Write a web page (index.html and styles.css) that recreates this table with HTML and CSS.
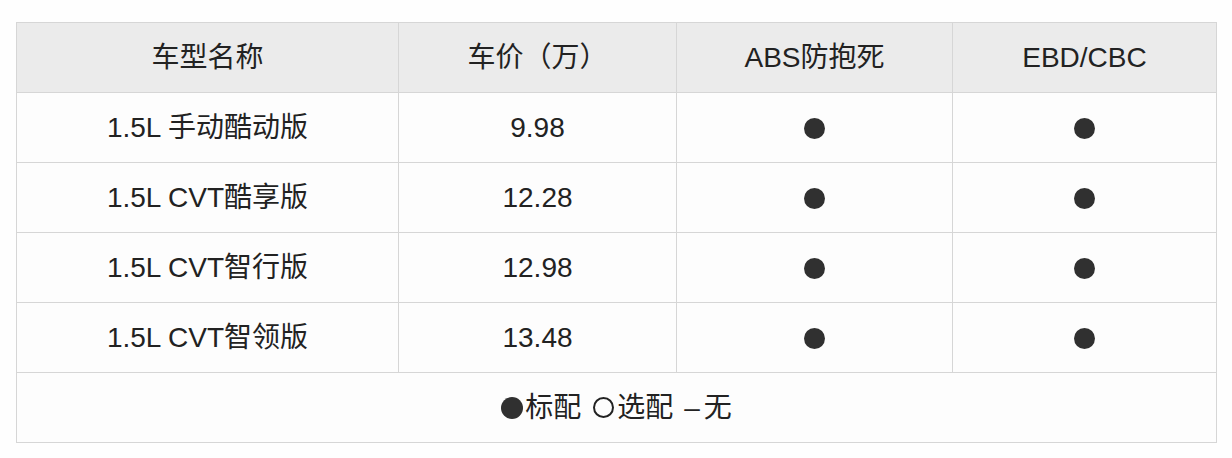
FILE: index.html
```html
<!DOCTYPE html>
<html lang="zh">
<head>
<meta charset="utf-8">
<title>车型配置</title>
<link rel="stylesheet" href="styles.css">
</head>
<body>
<div class="wrap">
<table class="spec">
  <colgroup>
    <col class="c1"><col class="c2"><col class="c3"><col class="c4">
  </colgroup>
  <thead>
    <tr><th>车型名称</th><th>车价（万）</th><th>ABS防抱死</th><th>EBD/CBC</th></tr>
  </thead>
  <tbody>
    <tr><td>1.5L 手动酷动版</td><td>9.98</td><td><span class="dot"></span></td><td><span class="dot"></span></td></tr>
    <tr><td>1.5L CVT酷享版</td><td>12.28</td><td><span class="dot"></span></td><td><span class="dot"></span></td></tr>
    <tr><td>1.5L CVT智行版</td><td>12.98</td><td><span class="dot"></span></td><td><span class="dot"></span></td></tr>
    <tr><td>1.5L CVT智领版</td><td>13.48</td><td><span class="dot"></span></td><td><span class="dot"></span></td></tr>
    <tr class="legend"><td colspan="4"><span class="dot small"></span>标配<span class="ring"></span>选配<span class="dash">–</span>无</td></tr>
  </tbody>
</table>
</div>
</body>
</html>
```
FILE: styles.css
```css
html, body {
  margin: 0;
  padding: 0;
  background: #fefefe;
}
.wrap {
  padding: 22px 0 0 16px;
}
.spec {
  border-collapse: collapse;
  table-layout: fixed;
  width: 1200px;
  font-family: "Liberation Sans", "Noto Sans CJK SC", sans-serif;
  font-size: 28px;
  color: #222;
  border: 1px solid #cfcfcf;
}
.c1 { width: 382px; }
.c2 { width: 278px; }
.c3 { width: 276px; }
.c4 { width: 264px; }
.spec th, .spec td {
  height: 69px;
  padding: 0;
  text-align: center;
  vertical-align: middle;
  border: 1px solid #d6d6d6;
  font-weight: normal;
  line-height: 1;
}
.spec th {
  background: #ebebeb;
}
.spec td {
  background: #fdfdfd;
}
.dot {
  display: inline-block;
  width: 21px;
  height: 21px;
  border-radius: 50%;
  background: #303030;
  vertical-align: middle;
  position: relative;
  top: -1px;
}
.dot.small {
  width: 22px;
  height: 22px;
  margin-right: 2px;
}
.ring {
  display: inline-block;
  width: 17px;
  height: 17px;
  border-radius: 50%;
  border: 2px solid #222;
  vertical-align: middle;
  position: relative;
  top: -2px;
  margin: 0 3px 0 12px;
}
.dash {
  margin: 0 4px 0 11px;
}
.legend td {
  background: #fdfdfd;
}
```
